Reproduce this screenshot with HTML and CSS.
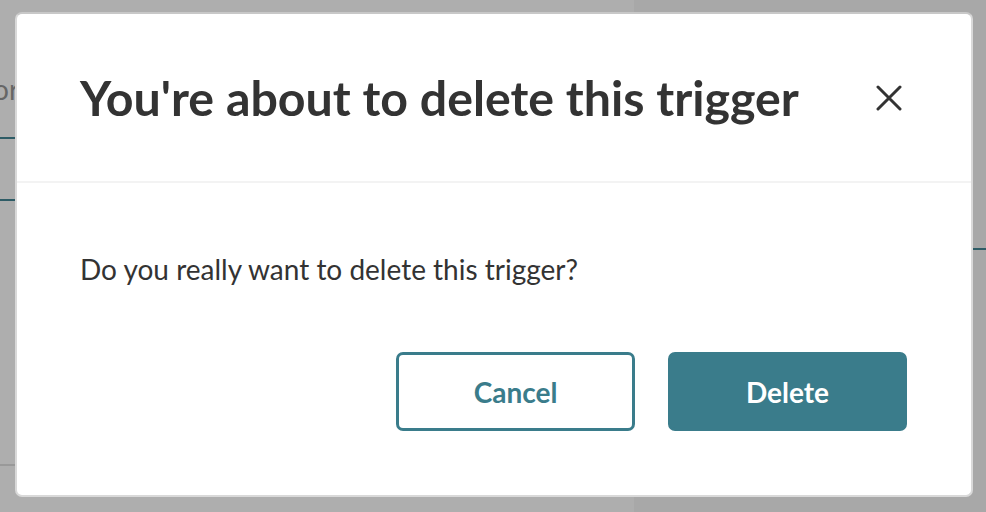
FILE: index.html
```html
<!DOCTYPE html>
<html>
<head>
<meta charset="utf-8">
<link rel="stylesheet" href="styles.css">
</head>
<body>
<div class="page">
  <div class="page-left">
    <div class="pl-text">Trigger for</div>
    <div class="pl-rule pl-rule1"></div>
    <div class="pl-rule pl-rule2"></div>
    <div class="pl-grey"></div>
  </div>
  <div class="page-right">
    <div class="pr-rule"></div>
  </div>
</div>
<div class="overlay">
  <div class="modal" role="dialog">
    <div class="modal-header">
      <h2 class="modal-title">You're about to delete this trigger</h2>
      <button class="close" aria-label="Close">
        <svg width="26" height="26" viewBox="0 0 26 26"><path d="M2 2 L24 24 M24 2 L2 24" stroke="#333" stroke-width="3" stroke-linecap="round" fill="none"/></svg>
      </button>
    </div>
    <div class="modal-body">
      <p class="message">Do you really want to delete this trigger?</p>
      <div class="actions">
        <button class="btn btn-outline">Cancel</button>
        <button class="btn btn-solid">Delete</button>
      </div>
    </div>
  </div>
</div>
</body>
</html>
```
FILE: styles.css
```css
html, body {
  margin: 0;
  padding: 0;
}
body {
  width: 986px;
  height: 512px;
  overflow: hidden;
  font-family: Lato, "Open Sans", sans-serif;
  position: relative;
  background: #a8a8a8;
}
.page {
  display: flex;
  height: 512px;
}
.page-left {
  width: 634px;
  background: #aeaeae;
  position: relative;
}
.page-right {
  flex: 1;
  background: #a8a8a8;
  position: relative;
}
.pl-text {
  position: absolute;
  left: -107px;
  top: 72px;
  font-size: 28px;
  color: #666;
  white-space: nowrap;
}
.pl-rule {
  position: absolute;
  left: 0;
  width: 600px;
  height: 2px;
  background: #2e5c66;
}
.pl-rule1 { top: 137px; }
.pl-rule2 { top: 199px; }
.pl-grey {
  position: absolute;
  left: 0;
  top: 464px;
  width: 600px;
  height: 2px;
  background: #999;
}
.pr-rule {
  position: absolute;
  left: 0;
  right: 0;
  top: 248px;
  height: 2px;
  background: #2e5c66;
}
.overlay {
  position: absolute;
  inset: 0;
  padding: 12px 13px 15px 15px;
  box-sizing: border-box;
}
.modal {
  width: 958px;
  height: 485px;
  box-sizing: border-box;
  background: #fff;
  border: 2px solid #d9d9d9;
  border-top-color: #c8c8c8;
  border-radius: 7px;
  display: flex;
  flex-direction: column;
}
.modal-header {
  height: 169px;
  box-sizing: border-box;
  border-bottom: 2px solid #f3f3f3;
  display: flex;
  align-items: center;
  justify-content: space-between;
  padding: 0 69px 0 63px;
}
.modal-title {
  margin: 0;
  font-size: 48.3px;
  font-weight: 700;
  color: #333;
  letter-spacing: 0;
  line-height: 56px;
  padding-bottom: 2px;
}
.close {
  border: 0;
  background: none;
  padding: 0;
  width: 26px;
  height: 26px;
  display: block;
}
.close svg { display: block; }
.modal-body {
  flex: 1;
  padding: 0 64px 0 63px;
  display: flex;
  flex-direction: column;
}
.message {
  margin: 68px 0 0 0;
  font-size: 28px;
  color: #333;
  line-height: 36px;
}
.actions {
  display: flex;
  justify-content: flex-end;
  gap: 33px;
  margin-top: 65px;
}
.btn {
  width: 239px;
  height: 79px;
  box-sizing: border-box;
  border-radius: 7px;
  font-family: Lato, "Open Sans", sans-serif;
  font-size: 28px;
  font-weight: 700;
  cursor: pointer;
}
.btn-outline {
  background: #fff;
  border: 3px solid #3a7c8b;
  color: #3a7c8b;
}
.btn-solid {
  background: #3a7c8b;
  border: 3px solid #3a7c8b;
  color: #fff;
}
```
